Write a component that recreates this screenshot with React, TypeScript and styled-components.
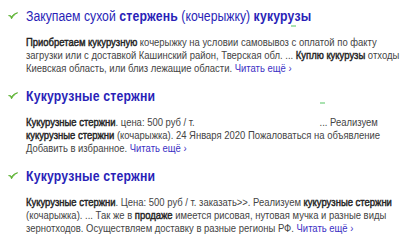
import React from "react";
import styled, { createGlobalStyle } from "styled-components";

const Global = createGlobalStyle`
  html, body { margin: 0; padding: 0; background: #fff; }
  body { width: 400px; height: 248px; overflow: hidden; font-family: "Liberation Sans", Arial, sans-serif; }
`;

const List = styled.div`
  display: flex;
  flex-direction: column;
  padding: 6px 0 0 8px;
  gap: 11px;
`;

const Item = styled.div`
  display: flex;
  flex-direction: column;
  gap: 10px;
  position: relative;
`;

const TitleRow = styled.div`
  display: flex;
  align-items: center;
  gap: 8px;
`;

const Check = styled.svg`
  width: 10px;
  height: 8px;
  flex: none;
`;

/* Titles and snippets use a horizontally condensed face (like Arial Narrow). */
const Title = styled.a`
  display: inline-block;
  font-size: 15.5px;
  line-height: 20px;
  color: #2a1fb8;
  text-decoration: none;
  white-space: nowrap;
  transform: scaleX(0.79);
  transform-origin: 0 50%;
  & b { font-weight: bold; letter-spacing: 0.25px; }
`;

const Snippet = styled.div`
  margin-left: 18px;
  display: flex;
  flex-direction: column;
  font-size: 11px;
  line-height: 13px;
  color: #444;
  transform: scaleX(0.86);
  transform-origin: 0 0;
  & b { color: #222; font-weight: normal; -webkit-text-stroke: 0.45px #222; }
`;

const Line = styled.div`
  white-space: nowrap;
`;

const Blank = styled.span<{ $w: number }>`
  display: inline-block;
  width: ${(p) => p.$w}px;
`;

const More = styled.a`
  color: #3b2fc4;
  text-decoration: none;
  white-space: nowrap;
`;

const Mark = styled.span<{ $x: number; $y: number }>`
  position: absolute;
  left: ${(p) => p.$x}px;
  top: ${(p) => p.$y}px;
  width: 5px;
  height: 2px;
  background: #a9e2b0;
`;

const Tick = () => (
  <Check viewBox="0 0 10 8">
    <path d="M0.6 3.6 C2 3.8 2.9 4.8 3.5 6.8 C5 3.9 7.1 1.9 9.6 0.8 C7.1 1.2 5.1 2.8 3.6 4.5 C2.9 3.7 1.9 3.4 0.6 3.6 Z" fill="#5fb336" stroke="#5fb336" strokeWidth="0.9" strokeLinejoin="round" />
  </Check>
);

const MoreLink = () => <More href="#">Читать ещё ›</More>;

export default function App() {
  return (
    <>
      <Global />
      <List>
        <Item>
          <TitleRow>
            <Tick />
            <Title href="#">Закупаем сухой <b>стержень</b> (кочерыжку) <b>кукурузы</b></Title>
          </TitleRow>
          <Mark $x={283} $y={19} />
          <Snippet>
            <Line><b>Приобретаем кукурузную</b> кочерыжку на условии самовывоз с оплатой по факту</Line>
            <Line>загрузки или с доставкой Кашинский район, Тверская обл. ... <b>Куплю кукурузы</b> отходы</Line>
            <Line>Киевская область, или близ лежащие области. <MoreLink /></Line>
          </Snippet>
        </Item>
        <Item>
          <TitleRow>
            <Tick />
            <Title href="#"><b>Кукурузные стержни</b></Title>
          </TitleRow>
          <Mark $x={312} $y={16} />
          <Snippet>
            <Line><b>Кукурузные стержни</b>. цена: 500 руб / т. <Blank $w={142} />... Реализуем</Line>
            <Line><b>кукурузные стержни</b> (кочарыжка). 24 Января 2020 Пожаловаться на объявление</Line>
            <Line>Добавить в избранное. <MoreLink /></Line>
          </Snippet>
        </Item>
        <Item>
          <TitleRow>
            <Tick />
            <Title href="#"><b>Кукурузные стержни</b></Title>
          </TitleRow>
          <Snippet>
            <Line><b>Кукурузные стержни</b>. Цена: 500 руб / т. заказать&gt;&gt;. Реализуем <b>кукурузные стержни</b></Line>
            <Line>(кочарыжка). ... Так же в <b>продаже</b> имеется рисовая, нутовая мучка и разные виды</Line>
            <Line>зернотходов. Осуществляем доставку в разные регионы РФ. <MoreLink /></Line>
          </Snippet>
        </Item>
      </List>
    </>
  );
}
